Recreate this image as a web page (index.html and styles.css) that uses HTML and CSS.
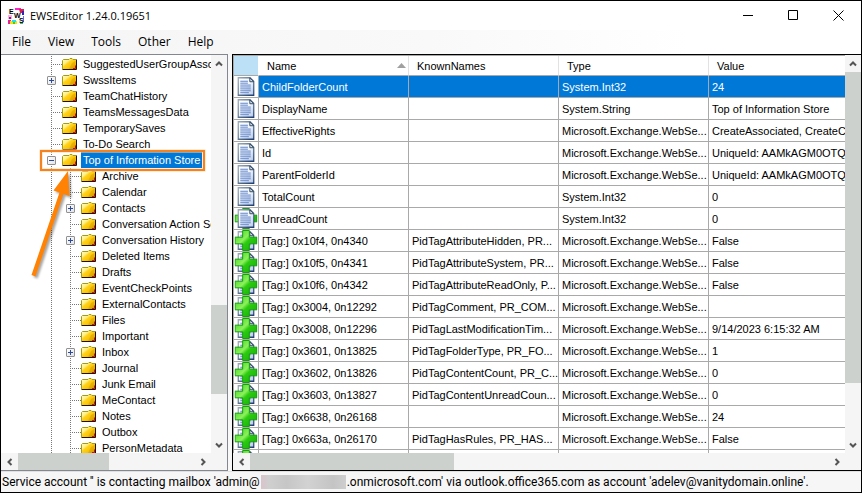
FILE: index.html
```
<!DOCTYPE html>
<html lang="en">
<head>
<meta charset="utf-8">
<title>EWSEditor 1.24.0.19651</title>
<link rel="stylesheet" href="styles.css">
</head>
<body>
<svg class="defs" aria-hidden="true">
  <defs>
    <linearGradient id="gold" x1="0" y1="0" x2="1" y2="1">
      <stop offset="0" stop-color="#ffffc8"/><stop offset=".3" stop-color="#fff08a"/><stop offset=".42" stop-color="#ffd21a"/><stop offset=".7" stop-color="#f8c000"/><stop offset="1" stop-color="#c88a00"/>
    </linearGradient>
    <linearGradient id="paper" x1="0" y1="0" x2="1" y2="1">
      <stop offset="0" stop-color="#ffffff"/><stop offset=".5" stop-color="#f2f6fc"/><stop offset="1" stop-color="#b4c6e4"/>
    </linearGradient>
    <linearGradient id="edge" x1="0" y1="0" x2="1" y2="1">
      <stop offset="0" stop-color="#9aa9b4"/><stop offset=".5" stop-color="#5d7590"/><stop offset="1" stop-color="#1d3c72"/>
    </linearGradient>
    <linearGradient id="green" x1="0" y1="0" x2="1" y2="1">
      <stop offset="0" stop-color="#35d512"/><stop offset=".42" stop-color="#8cf05c"/><stop offset=".55" stop-color="#2ccc10"/><stop offset="1" stop-color="#12a808"/>
    </linearGradient>
    <symbol id="folder" viewBox="0 0 15 12">
      <path d="M1 1.500h6l1-1h2l1 1h3.500v10H.5V3z" fill="url(#gold)"/>
      <path d="M10 5l-3 6h6.500V3z" fill="#c98a00" opacity=".35"/>
      <path d="M.5 11V2.500l1-1h5.500l1-1h2l1 1h3" fill="none" stroke="#a39b10"/>
      <path d="M14.500 1.500v10H.5" fill="none" stroke="#1e1200"/>
      <path d="M13.500 7.500v3h-2.500" fill="none" stroke="#d01010"/>
    </symbol>
    <symbol id="page" viewBox="0 0 18 20">
      <path d="M.75.750h12.500l4 4v14.500H.75z" fill="url(#paper)" stroke="url(#edge)" stroke-width="1.500"/>
      <path d="M13 1v4h4z" fill="#dfe7ef" stroke="#30475f" stroke-width="1"/>
      <path d="M3 4.500h8M3 6.500h8M3 8.500h11M3 10.500h11M3 12.500h11M3 14.500h11M3 16.500h9" stroke="#5a80c8"/>
    </symbol>
    <symbol id="cross" viewBox="0 0 24 22">
      <path d="M8.500.500h7v7h8v7h-8v7h-7v-7h-8v-7h8z" fill="url(#green)" stroke="#0f9a0a" stroke-linejoin="round"/>
    </symbol>
    <symbol id="i-page" viewBox="0 0 24 22"><use href="#page" x="3" y="1" width="18" height="20"/></symbol>
    <symbol id="i-both" viewBox="0 0 24 22"><use href="#cross" width="24" height="22"/><use href="#page" x="3" y="1" width="18" height="20"/></symbol>
    <symbol id="i-tag" viewBox="0 0 24 22"><use href="#page" x="3" y="1" width="18" height="20"/><use href="#cross" width="24" height="22"/></symbol>
    <symbol id="plus" viewBox="0 0 7 7"><path d="M1 3.500h5M3.500 1v5" stroke="#2c4a9c"/></symbol>
    <symbol id="minus" viewBox="0 0 7 7"><path d="M1 3.500h5" stroke="#2c4a9c"/></symbol>
    <symbol id="chev" viewBox="0 0 8 8"><path d="M1 5.500l3-3 3 3" fill="none" stroke="#555" stroke-width="2"/></symbol>
  </defs>
</svg>

<header class="titlebar">
  <svg class="appicon" viewBox="0 0 16 16" aria-hidden="true">
    <path d="M7 0h6v2H7z" fill="#ff20d0"/><path d="M11 1h5v4h-4z" fill="#e02040"/><path d="M14 3h2v4h-2z" fill="#3020c0"/>
    <path d="M0 7h4v4H0z" fill="#ffb0d8"/><path d="M1 9h2v2H1z" fill="#8020a0"/><path d="M0 12h3v4H0z" fill="#e8209c"/>
    <path d="M2 13h7v3H2z" fill="#ffe000"/><path d="M4 12h4v2H4z" fill="#20e0f0"/><path d="M5 14h2v2H5z" fill="#30d040"/><path d="M15 8h1v6h-1z" fill="#7070e0"/><path d="M12 15h3v1h-3z" fill="#40c060"/>
    <text x="1" y="6">E</text><text x="6" y="10">W</text><text x="11" y="15">S</text>
  </svg>
  <h1>EWSEditor 1.24.0.19651</h1>
  <div class="winbtns">
    <button aria-label="Minimize"><svg viewBox="0 0 11 11"><path d="M0 5.500h10"/></svg></button>
    <button aria-label="Maximize"><svg viewBox="0 0 11 11"><path d="M.5.500h9v9h-9z"/></svg></button>
    <button aria-label="Close"><svg viewBox="0 0 11 11"><path d="M.5.500l10 10M10.500.500l-10 10"/></svg></button>
  </div>
</header>

<nav class="menubar">
  <button>File</button><button>View</button><button>Tools</button><button>Other</button><button>Help</button>
</nav>

<main>
  <section class="panel treepanel" aria-label="Folders">
    <div class="tree">
      <ul>
        <li><div class="row"><i></i><svg><use href="#folder"/></svg><span>SuggestedUserGroupAssoc</span></div></li>
        <li><div class="row"><button aria-label="Expand SwssItems"><svg><use href="#plus"/></svg></button><svg><use href="#folder"/></svg><span>SwssItems</span></div></li>
        <li><div class="row"><i></i><svg><use href="#folder"/></svg><span>TeamChatHistory</span></div></li>
        <li><div class="row"><i></i><svg><use href="#folder"/></svg><span>TeamsMessagesData</span></div></li>
        <li><div class="row"><i></i><svg><use href="#folder"/></svg><span>TemporarySaves</span></div></li>
        <li><div class="row"><i></i><svg><use href="#folder"/></svg><span>To-Do Search</span></div></li>
        <li><div class="row selected"><button aria-label="Collapse Top of Information Store"><svg><use href="#minus"/></svg></button><svg><use href="#folder"/></svg><span>Top of Information Store</span></div>
          <ul>
            <li><div class="row"><i></i><svg><use href="#folder"/></svg><span>Archive</span></div></li>
            <li><div class="row"><i></i><svg><use href="#folder"/></svg><span>Calendar</span></div></li>
            <li><div class="row"><button aria-label="Expand Contacts"><svg><use href="#plus"/></svg></button><svg><use href="#folder"/></svg><span>Contacts</span></div></li>
            <li><div class="row"><i></i><svg><use href="#folder"/></svg><span>Conversation Action Se</span></div></li>
            <li><div class="row"><button aria-label="Expand Conversation History"><svg><use href="#plus"/></svg></button><svg><use href="#folder"/></svg><span>Conversation History</span></div></li>
            <li><div class="row"><i></i><svg><use href="#folder"/></svg><span>Deleted Items</span></div></li>
            <li><div class="row"><i></i><svg><use href="#folder"/></svg><span>Drafts</span></div></li>
            <li><div class="row"><i></i><svg><use href="#folder"/></svg><span>EventCheckPoints</span></div></li>
            <li><div class="row"><i></i><svg><use href="#folder"/></svg><span>ExternalContacts</span></div></li>
            <li><div class="row"><i></i><svg><use href="#folder"/></svg><span>Files</span></div></li>
            <li><div class="row"><i></i><svg><use href="#folder"/></svg><span>Important</span></div></li>
            <li><div class="row"><button aria-label="Expand Inbox"><svg><use href="#plus"/></svg></button><svg><use href="#folder"/></svg><span>Inbox</span></div></li>
            <li><div class="row"><i></i><svg><use href="#folder"/></svg><span>Journal</span></div></li>
            <li><div class="row"><i></i><svg><use href="#folder"/></svg><span>Junk Email</span></div></li>
            <li><div class="row"><i></i><svg><use href="#folder"/></svg><span>MeContact</span></div></li>
            <li><div class="row"><i></i><svg><use href="#folder"/></svg><span>Notes</span></div></li>
            <li><div class="row"><i></i><svg><use href="#folder"/></svg><span>Outbox</span></div></li>
            <li><div class="row"><i></i><svg><use href="#folder"/></svg><span>PersonMetadata</span></div></li>
          </ul>
        </li>
      </ul>
      <svg class="callout" width="209" height="240" viewBox="0 0 209 240" aria-hidden="true">
        <rect x="40" y="96" width="163" height="19" fill="none" stroke="#ffd9b0" stroke-width="3"/>
        <rect x="40" y="96" width="163" height="19" fill="none" stroke="#f58220" stroke-width="2"/>
        <path class="arrow" d="M67 116L52.500 135.500L58.500 137.500L30.500 220L34.500 221.500L62.500 139L68.500 141z" fill="#ff8205"/>
      </svg>
    </div>
    <div class="vbar tree-v">
      <button aria-label="Scroll up"><svg><use href="#chev"/></svg></button>
      <div class="track"><b class="before"></b><b class="thumb"></b><b class="after"></b></div>
      <button class="down" aria-label="Scroll down"><svg><use href="#chev"/></svg></button>
    </div>
    <div class="hbar tree-h">
      <button class="left" aria-label="Scroll left"><svg><use href="#chev"/></svg></button>
      <div class="track"><b class="thumb"></b><b class="after"></b></div>
      <button class="right" aria-label="Scroll right"><svg><use href="#chev"/></svg></button>
    </div>
  </section>

  <section class="panel gridpanel" aria-label="Properties">
    <div class="tablewrap">
      <table>
        <colgroup><col class="c-icon"><col class="c-data"><col class="c-data"><col class="c-data"><col></colgroup>
        <thead>
          <tr><th class="corner"></th><th><div class="sorted">Name<svg viewBox="0 0 9 5" aria-hidden="true"><path d="M0 5l4.500-5L9 5z" fill="#a0a0a0"/></svg></div></th><th>KnownNames</th><th>Type</th><th>Value</th></tr>
        </thead>
        <tbody>
          <tr class="selected"><td><svg><use href="#i-page"/></svg></td><td>ChildFolderCount</td><td></td><td>System.Int32</td><td>24</td></tr>
          <tr><td><svg><use href="#i-page"/></svg></td><td>DisplayName</td><td></td><td>System.String</td><td>Top of Information Store</td></tr>
          <tr><td><svg><use href="#i-page"/></svg></td><td>EffectiveRights</td><td></td><td>Microsoft.Exchange.WebSe...</td><td>CreateAssociated, CreateCo</td></tr>
          <tr><td><svg><use href="#i-page"/></svg></td><td>Id</td><td></td><td>Microsoft.Exchange.WebSe...</td><td>UniqueId: AAMkAGM0OTQy</td></tr>
          <tr><td><svg><use href="#i-page"/></svg></td><td>ParentFolderId</td><td></td><td>Microsoft.Exchange.WebSe...</td><td>UniqueId: AAMkAGM0OTQy</td></tr>
          <tr><td><svg><use href="#i-page"/></svg></td><td>TotalCount</td><td></td><td>System.Int32</td><td>0</td></tr>
          <tr><td><svg><use href="#i-both"/></svg></td><td>UnreadCount</td><td></td><td>System.Int32</td><td>0</td></tr>
          <tr><td><svg><use href="#i-tag"/></svg></td><td>[Tag:] 0x10f4, 0n4340</td><td>PidTagAttributeHidden, PR...</td><td>Microsoft.Exchange.WebSe...</td><td>False</td></tr>
          <tr><td><svg><use href="#i-tag"/></svg></td><td>[Tag:] 0x10f5, 0n4341</td><td>PidTagAttributeSystem, PR...</td><td>Microsoft.Exchange.WebSe...</td><td>False</td></tr>
          <tr><td><svg><use href="#i-tag"/></svg></td><td>[Tag:] 0x10f6, 0n4342</td><td>PidTagAttributeReadOnly, P...</td><td>Microsoft.Exchange.WebSe...</td><td>False</td></tr>
          <tr><td><svg><use href="#i-tag"/></svg></td><td>[Tag:] 0x3004, 0n12292</td><td>PidTagComment, PR_COM...</td><td>Microsoft.Exchange.WebSe...</td><td></td></tr>
          <tr><td><svg><use href="#i-tag"/></svg></td><td>[Tag:] 0x3008, 0n12296</td><td>PidTagLastModificationTim...</td><td>Microsoft.Exchange.WebSe...</td><td>9/14/2023 6:15:32 AM</td></tr>
          <tr><td><svg><use href="#i-tag"/></svg></td><td>[Tag:] 0x3601, 0n13825</td><td>PidTagFolderType, PR_FO...</td><td>Microsoft.Exchange.WebSe...</td><td>1</td></tr>
          <tr><td><svg><use href="#i-tag"/></svg></td><td>[Tag:] 0x3602, 0n13826</td><td>PidTagContentCount, PR_C...</td><td>Microsoft.Exchange.WebSe...</td><td>0</td></tr>
          <tr><td><svg><use href="#i-tag"/></svg></td><td>[Tag:] 0x3603, 0n13827</td><td>PidTagContentUnreadCoun...</td><td>Microsoft.Exchange.WebSe...</td><td>0</td></tr>
          <tr><td><svg><use href="#i-tag"/></svg></td><td>[Tag:] 0x6638, 0n26168</td><td></td><td>Microsoft.Exchange.WebSe...</td><td>24</td></tr>
          <tr><td><svg><use href="#i-tag"/></svg></td><td>[Tag:] 0x663a, 0n26170</td><td>PidTagHasRules, PR_HAS...</td><td>Microsoft.Exchange.WebSe...</td><td>False</td></tr>
          <tr><td><svg><use href="#i-tag"/></svg></td><td></td><td></td><td></td><td></td></tr>
        </tbody>
      </table>
    </div>
    <div class="vbar grid-v">
      <button aria-label="Scroll up"><svg><use href="#chev"/></svg></button>
      <div class="track"><b class="thumb"></b><b class="after"></b></div>
      <button class="down" aria-label="Scroll down"><svg><use href="#chev"/></svg></button>
    </div>
    <div class="hbar grid-h">
      <button class="left" aria-label="Scroll left"><svg><use href="#chev"/></svg></button>
      <div class="track"><b class="thumb"></b><b class="after"></b></div>
      <button class="right" aria-label="Scroll right"><svg><use href="#chev"/></svg></button>
    </div>
  </section>
</main>

<footer class="status"><span>Service account '' is contacting mailbox 'admin@</span><span class="redacted"></span><span>.onmicrosoft.com' via outlook.office365.com as account 'adelev@vanitydomain.online'.</span></footer>
</body>
</html>
```
FILE: styles.css
```
* { box-sizing: border-box; }

body {
  margin: 0;
  height: 100vh;
  overflow: hidden;
  display: flex;
  flex-direction: column;
  border: 1px solid #000;
  background: #fff;
  color: #000;
  font: 11px/16px "Liberation Sans", Arial, sans-serif;
}

button {
  margin: 0;
  padding: 0;
  border: 0;
  background: none;
  color: inherit;
  font: inherit;
}

.defs { position: absolute; width: 0; height: 0; }

/* Title bar and menu */
.titlebar { display: flex; align-items: center; height: 29px; padding-left: 7px; }
.appicon { width: 16px; height: 16px; }
.appicon text { font: bold 7px "Liberation Sans", sans-serif; }
.titlebar h1 {
  flex: 1;
  margin: 0 0 0 6px;
  font: 11px/16px "Open Sans", sans-serif;
}
.winbtns { display: flex; }
.winbtns button { display: grid; place-items: center; width: 45px; height: 28px; }
.winbtns svg { width: 11px; height: 11px; fill: none; stroke: #000; }

.menubar {
  display: flex;
  gap: 17px;
  height: 24px;
  padding-left: 11px;
  background: linear-gradient(90deg, #f5f5f5, #f9f9f9 50%, #fff 80%);
  font: 12px/24px "Open Sans", sans-serif;
}

/* Main area */
main {
  flex: 1;
  min-height: 0;
  display: grid;
  grid-template-columns: 227px minmax(0, 1fr);
  gap: 4px;
  background: #f8f8f8;
}
.panel { display: grid; min-height: 0; background: #f5f5f5; }
.treepanel {
  grid-template: minmax(0, 1fr) 17px / minmax(0, 1fr) 16px;
  border: 1px solid #828790;
  border-left: 0;
}
.gridpanel {
  grid-template: minmax(0, 1fr) 17px / minmax(0, 1fr) 16px;
  border: 1px solid #000;
  border-right: 0;
}

/* Folder tree */
.tree { position: relative; overflow: hidden; padding: 1px 0 0 46px; background: #fff; }
.tree ul {
  margin: 0;
  padding: 0;
  list-style: none;
  background: repeating-linear-gradient(#777 0 1px, transparent 1px 2px) 4px 0 / 1px 100% no-repeat;
}
.tree ul ul { margin-left: 19px; }
.row { display: flex; align-items: center; height: 16px; white-space: nowrap; }
.row > i { flex: none; width: 15px; height: 1px; background: repeating-linear-gradient(90deg, #777 0 1px, transparent 1px 2px) 4px 0 no-repeat; }
.row > button {
  display: grid;
  width: 9px;
  height: 9px;
  margin-right: 6px;
  border: 1px solid #919191;
  border-radius: 1px;
  background: linear-gradient(135deg, #fff, #e4e4e4);
}
.row > button svg { width: 7px; height: 7px; }
.row > svg { flex: none; width: 15px; height: 12px; margin-right: 4px; }
.row > span { padding: 0 2px; }
.row.selected > span { background: #0078d7; color: #fff; }
.callout { position: absolute; left: 0; top: 0; pointer-events: none; }
.arrow { filter: drop-shadow(2px 2px 1px rgb(0 0 0 / .35)); }

/* Scroll bars */
.vbar, .hbar, .track { display: flex; }
.vbar, .vbar .track { flex-direction: column; }
.track { flex: 1; }
.vbar button, .hbar button { display: grid; place-items: center; flex: 0 0 17px; }
.vbar svg, .hbar svg { width: 8px; height: 8px; }
.down svg { transform: rotate(180deg); }
.left svg { transform: rotate(-90deg); }
.right svg { transform: rotate(90deg); }
.thumb { background: #cdd1ce; }
.tree-v .before { flex: 233; }
.tree-v .thumb { flex: 89; }
.tree-v .after { flex: 42; }
.tree-h .thumb { flex: 90; }
.tree-h .after { flex: 85; }
.grid-v .thumb { flex: 312; }
.grid-v .after { flex: 53; }
.grid-h .thumb { flex: 204; }
.grid-h .after { flex: 374; }

/* Property grid */
.tablewrap {
  overflow: hidden;
  border: solid #a9a9a9;
  border-width: 1px 0 0 1px;
  background: #fff;
}
table { width: 100%; table-layout: fixed; border-spacing: 0; }
.c-icon { width: 25px; }
.c-data { width: 150px; }
th, td {
  overflow: hidden;
  padding: 0 3px;
  border: solid #a9a9a9;
  border-width: 0 1px 1px 0;
  text-align: left;
  font-weight: normal;
  white-space: nowrap;
}
th { height: 20px; padding: 0 8px; border-right-color: #e2e2e2; }
td { height: 22px; }
th:last-child, td:last-child { border-right: 0; }
td:last-child { padding-right: 0; }
th.corner { background: #bce0f5; border-right-color: #fff; }
td:first-child { padding: 0; }
td svg { display: block; width: 24px; height: 21px; overflow: visible; }
.sorted { display: flex; align-items: center; justify-content: space-between; margin-right: -6px; }
.sorted svg { width: 9px; height: 5px; }
tr.selected td:not(:first-child) { background: #0078d7; color: #fff; }

/* Status bar */
.status {
  display: flex;
  align-items: center;
  height: 21px;
  padding: 0 1px;
  border-top: 1px solid #e0e0e0;
  background: #f6f6f6;
  font: 12px/16px Roboto, "Liberation Sans", sans-serif;
  white-space: nowrap;
}
.redacted {
  width: 85px;
  height: 14px;
  margin: 0 1px;
  background: linear-gradient(90deg, #d9c4cc, #cfcfcf 10%, #c6c6c6 30%, #d2d2d2 55%, #c4c4c4 85%, #cecece);
}
```
